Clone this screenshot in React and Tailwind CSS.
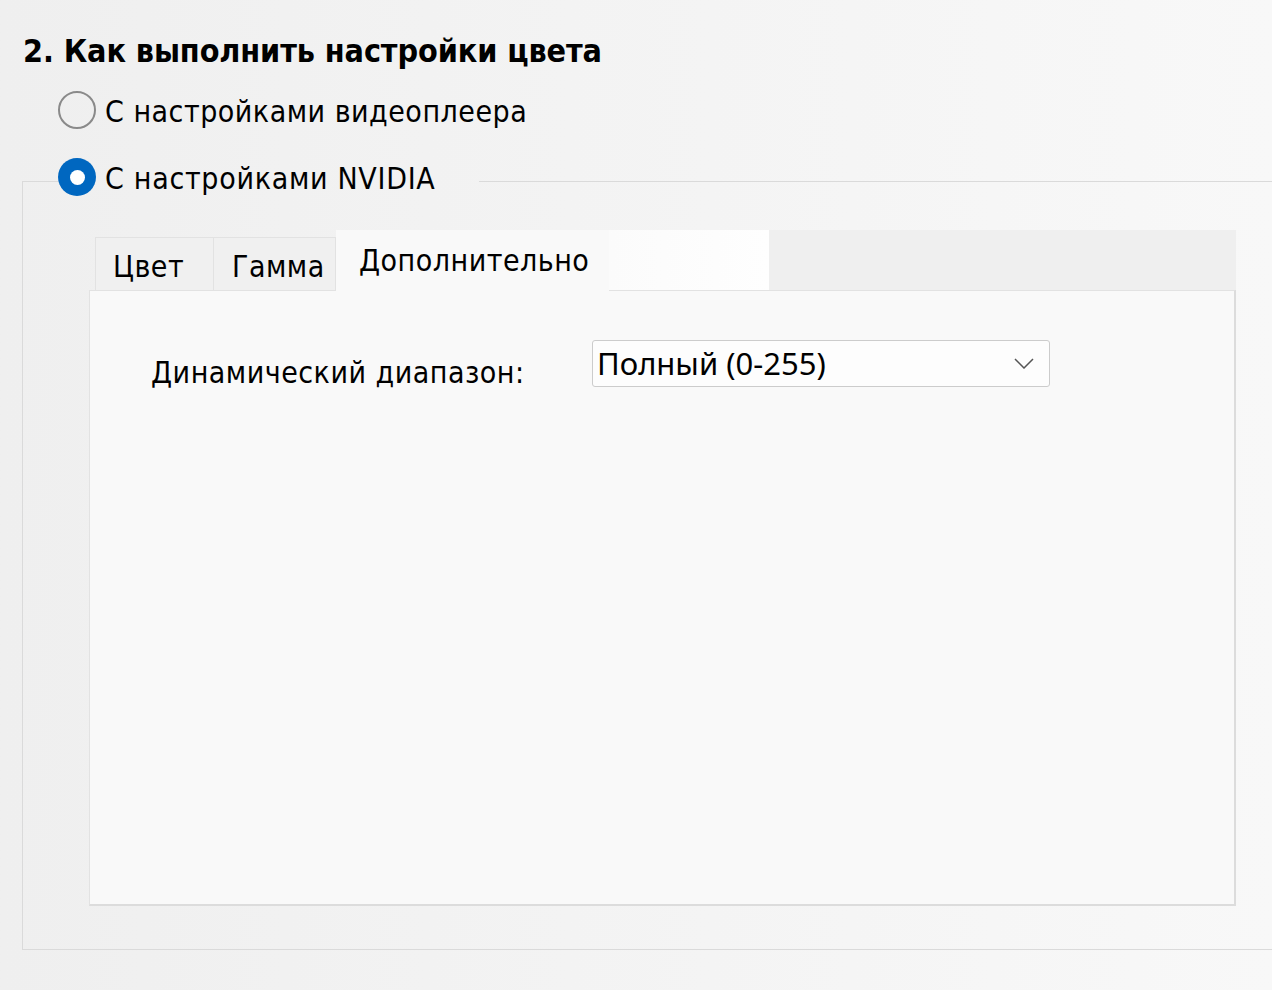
import React from "react";

const F = { fontFamily: '"DejaVu Sans Condensed", "Liberation Sans", sans-serif' };

function Radio({ checked }) {
  if (checked) {
    return (
      <span className="w-[38px] h-[38px] rounded-full bg-[#0067c0] flex items-center justify-center shrink-0">
        <span className="w-[15px] h-[15px] rounded-full bg-white" />
      </span>
    );
  }
  return <span className="w-[38px] h-[38px] rounded-full border-[2px] border-[#8a8a8a] shrink-0" />;
}

export default function App() {
  return (
    <div
      className="w-[1272px] h-[990px] overflow-hidden bg-linear-to-r from-[#efefef] to-[#f8f8f8] text-black"
      style={F}
    >
      <div className="pt-[35px] pl-[23px] text-[32px] leading-[32px] font-bold tracking-[-0.1px]">
        2. Как выполнить настройки цвета
      </div>

      <div className="mt-[24px] pl-[58px] flex items-center h-[38px] gap-[9px] text-[30px] leading-[30px] tracking-[0.5px]">
        <Radio />
        <span className="pt-[3px]">С настройками видеоплеера</span>
      </div>

      <fieldset className="mt-[29px] ml-[22px] w-[1300px] h-[792px] border-l border-t border-b border-[#dadada]">
        <legend className="ml-[35px] pb-[8px] pr-[44px]">
          <div className="flex items-center h-[38px] gap-[9px] text-[30px] leading-[30px] tracking-[0.7px]">
            <Radio checked />
            <span className="pt-[3px]">С настройками NVIDIA</span>
          </div>
        </legend>

        <div className="mt-[26px] ml-[66px] w-[1147px] text-[30px] leading-[30px] tracking-[0.5px]">
          <div className="flex items-end h-[60px]">
            <div className="w-[6px]" />
            <div className="w-[119px] h-[53px] bg-[#f0f0f0] border border-b-0 border-[#e2e2e2] pl-[17px] pt-[14px]">
              Цвет
            </div>
            <div className="w-[122px] h-[53px] bg-[#f0f0f0] border border-l-0 border-b-0 border-[#e2e2e2] pl-[18px] pt-[14px]">
              Гамма
            </div>
            <div className="relative z-10 -mb-px w-[273px] h-[61px] bg-[#f9f9f9] pl-[23px] pt-[16px]">
              Дополнительно
            </div>
            <div className="w-[160px] h-[60px] bg-linear-to-r from-[#fbfbfb] to-[#fefefe]" />
            <div className="flex-1 h-[60px] bg-[#efefef]" />
          </div>

          <div className="h-[616px] bg-[#f9f9f9] border border-[#e2e2e2] border-r-[2px] border-b-[2px] border-r-[#dcdcdc] border-b-[#dcdcdc] pt-[49px] pl-[61px] flex items-start">
            <div className="w-[441px] mt-[18px]">Динамический диапазон:</div>
            <div className="w-[458px] h-[47px] bg-[#fdfdfd] border border-[#cccccc] rounded-[3px] flex items-center justify-between pl-[4px] pr-[15px] tracking-normal">
              <span
                className="text-[31px] leading-[31px]"
                style={{ fontFamily: '"Noto Sans", "Open Sans", sans-serif' }}
              >
                Полный (0-255)
              </span>
              <svg width="20" height="11" viewBox="0 0 20 11" fill="none">
                <path d="M1 1 L10 10 L19 1" stroke="#555" strokeWidth="1.5" />
              </svg>
            </div>
          </div>
        </div>
      </fieldset>
    </div>
  );
}
